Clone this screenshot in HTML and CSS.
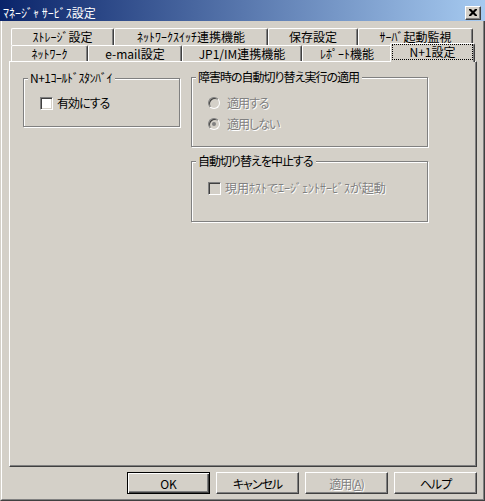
FILE: index.html
```html
<!DOCTYPE html>
<html lang="ja">
<head>
<title>マネージャ サービス設定</title>
<meta name="viewport" content="width=device-width, initial-scale=1.0">
<link rel="stylesheet" href="styles.css">
</head>
<body>
<div class="titlebar">
    <span class="title">ﾏﾈｰｼﾞｬ ｻｰﾋﾞｽ設定</span>
    <span class="close">
        <svg width="8" height="7" viewBox="0 0 8 7"><path d="M0 0h2l2 2 2-2h2v1l-2.5 2.5L8 6v1H6L4 5 2 7H0V6l2.5-2.5L0 1z" fill="#000"/></svg>
    </span>
</div>

<div class="dialog">
<div class="client">
    <div class="tabrow back">
        <div class="tab w-storage">ｽﾄﾚｰｼﾞ設定</div>
        <div class="tab w-switch">ﾈｯﾄﾜｰｸｽｲｯﾁ連携機能</div>
        <div class="tab w-save">保存設定</div>
        <div class="tab w-monitor">ｻｰﾊﾞ起動監視</div>
    </div>
    <div class="tabrow front">
        <div class="tab w-network">ﾈｯﾄﾜｰｸ</div>
        <div class="tab w-mail">e-mail設定</div>
        <div class="tab w-jp1">JP1/IM連携機能</div>
        <div class="tab w-report">ﾚﾎﾟｰﾄ機能</div>
        <div class="tab w-n1 selected"><span class="focus">N+1設定</span></div>
    </div>

    <div class="panel">
        <fieldset class="group g-standby">
            <legend>N+1ｺｰﾙﾄﾞｽﾀﾝﾊﾞｲ</legend>
            <div class="option">
                <span class="check"></span>
                <span class="label">有効にする</span>
            </div>
        </fieldset>

        <div class="col">
            <fieldset class="group g-switch">
                <legend>障害時の自動切り替え実行の適用</legend>
                <div class="option">
                    <span class="radio"></span>
                    <span class="label disabled">適用する</span>
                </div>
                <div class="option">
                    <span class="radio on"></span>
                    <span class="label disabled">適用しない</span>
                </div>
            </fieldset>

            <fieldset class="group g-stop">
                <legend>自動切り替えを中止する</legend>
                <div class="option">
                    <span class="check off"></span>
                    <span class="label wide disabled">現用ﾎｽﾄでｴｰｼﾞｪﾝﾄｻｰﾋﾞｽが起動</span>
                </div>
            </fieldset>
        </div>
    </div>

    <div class="buttons">
        <div class="btn default">OK</div>
        <div class="btn">キャンセル</div>
        <div class="btn disabled">適用(<u>A</u>)</div>
        <div class="btn">ヘルプ</div>
    </div>
</div>
</div>
</body>
</html>
```

FILE: styles.css
```css
body {
    margin: 0;
    width: 485px;
    height: 501px;
    background: #d4d0c8;
    font-family: "Noto Sans CJK JP", sans-serif;
    font-size: 12px;
    font-feature-settings: "palt";
    color: #000;
    overflow: hidden;
}

.titlebar {
    box-sizing: border-box;
    height: 21px;
    padding: 4px 4px 0 3px;
    display: flex;
    align-items: center;
    justify-content: space-between;
    background: linear-gradient(to right, #0a246a, #a6caf0);
    color: white;
}

.title {
    line-height: 14px;
}

.close {
    box-sizing: border-box;
    width: 16px;
    height: 14px;
    display: flex;
    align-items: center;
    justify-content: center;
    background: #d4d0c8;
    border: 1px solid;
    border-color: #fff #404040 #404040 #fff;
    box-shadow: inset -1px -1px #808080;
}

.dialog {
    box-sizing: border-box;
    height: 480px;
    border-left: 1px solid #d4d0c8;
    border-right: 1px solid #404040;
    border-bottom: 1px solid #404040;
}

.client {
    box-sizing: border-box;
    height: 100%;
    border-left: 1px solid #fff;
    border-right: 1px solid #808080;
    border-bottom: 1px solid #808080;
    padding-top: 7px;
}

/* tabs */

.tabrow {
    display: flex;
    align-items: flex-start;
    margin-left: 9px;
    width: 462px;
}

.tabrow.back {
    height: 17px;
}

.tabrow.front {
    height: 16px;
}

.tab {
    box-sizing: border-box;
    height: 100%;
    display: flex;
    align-items: center;
    justify-content: center;
    background: #d4d0c8;
    border: 1px solid;
    border-bottom: none;
    border-color: #fff #404040 #fff #fff;
    border-radius: 2px 2px 0 0;
    box-shadow: inset -1px 0 #808080;
    white-space: nowrap;
    line-height: 12px;
}

.w-storage { width: 103px; }
.w-switch { width: 154px; }
.w-save { width: 90px; }
.w-monitor { width: 115px; }
.w-network { width: 77px; }
.w-mail { width: 94px; }
.w-jp1 { width: 120px; }
.w-report { width: 90px; }
.w-n1 { width: 81px; }

.tab.selected {
    position: relative;
    z-index: 1;
    width: 85px;
    height: 19px;
    margin: -2px -2px 0;
    padding: 1px 2px 3px;
    align-items: stretch;
}

.focus {
    flex: 1;
    display: flex;
    align-items: center;
    justify-content: center;
    outline: 1px dotted #000;
}

/* panel */

.panel {
    box-sizing: border-box;
    height: 406px;
    margin: 0 6px 0 7px;
    padding: 8px 0 0 13px;
    display: flex;
    align-items: flex-start;
    gap: 11px;
    border: 1px solid;
    border-color: #fff #404040 #404040 #fff;
    box-shadow: inset -1px -1px #808080;
}

.col {
    display: flex;
    flex-direction: column;
    gap: 7px;
}

.group {
    box-sizing: border-box;
    margin: 0;
    padding: 10px 4px 0;
    min-width: 0;
    border: 1px solid #808080;
    box-shadow: inset 1px 1px #fff, 1px 1px #fff;
}

.group legend {
    padding: 0 3px 0 2px;
    line-height: 14px;
    letter-spacing: -1px;
    background: #d4d0c8;
}

.g-standby legend {
    letter-spacing: -0.5px;
}

.g-standby {
    width: 157px;
    height: 56px;
    margin-top: 1px;
}

.g-switch {
    width: 237px;
    height: 77px;
    padding-top: 11px;
}

.g-stop {
    width: 237px;
    height: 68px;
    padding-top: 12px;
}

.option {
    height: 16px;
    margin-left: 12px;
    display: flex;
    align-items: center;
    gap: 4px;
    white-space: nowrap;
}

.option + .option {
    margin-top: 5px;
}

.check {
    box-sizing: border-box;
    width: 13px;
    height: 13px;
    background: #fff;
    border: 1px solid;
    border-color: #808080 #fff #fff #808080;
    box-shadow: inset 1px 1px #404040, inset -1px -1px #d4d0c8;
}

.check.off {
    background: #d4d0c8;
}

.radio {
    box-sizing: border-box;
    width: 12px;
    height: 12px;
    margin-right: 3px;
    border-radius: 50%;
    display: flex;
    align-items: center;
    justify-content: center;
    background: #d4d0c8;
    border: 1px solid;
    border-color: #808080 #fff #fff #808080;
    box-shadow: inset 1px 1px #404040, inset -1px -1px #d4d0c8;
}

.radio.on::after {
    content: "";
    width: 4px;
    height: 4px;
    border-radius: 50%;
    background: #808080;
}

.label {
    line-height: 14px;
    letter-spacing: -1px;
}

.label.wide {
    letter-spacing: 0;
}

.disabled {
    color: #808080;
    text-shadow: 1px 1px #fff;
}

/* buttons */

.buttons {
    display: flex;
    justify-content: flex-end;
    gap: 6px;
    margin-top: 5px;
    padding-right: 6px;
}

.btn {
    box-sizing: border-box;
    width: 83px;
    height: 22px;
    display: flex;
    align-items: center;
    justify-content: center;
    letter-spacing: -1px;
    border: 1px solid;
    border-color: #fff #404040 #404040 #fff;
    box-shadow: inset -1px -1px #808080;
}

.btn.default {
    border-color: #000;
    letter-spacing: 0;
    box-shadow: inset 1px 1px #fff, inset -1px -1px #404040, inset -2px -2px #808080;
}
```
